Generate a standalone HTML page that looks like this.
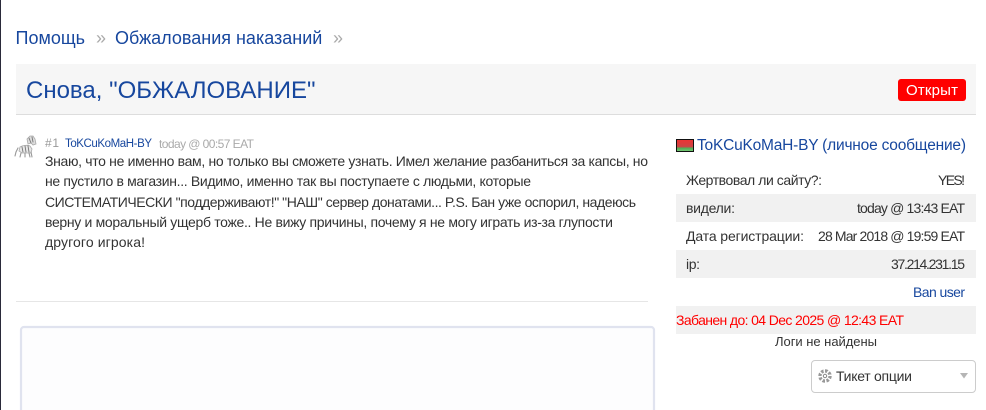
<!DOCTYPE html>
<html lang="ru">
<head>
<meta charset="utf-8">
<title>Снова, "ОБЖАЛОВАНИЕ"</title>
<style>
html,body{margin:0;padding:0;background:#fff;width:986px;height:410px;overflow:hidden}
svg{display:block;position:absolute;left:0;top:0}
text{font-family:"Liberation Sans",sans-serif;font-size:14px;fill:#333;white-space:pre}
.b{fill:#17479e}
.g{fill:#999}
</style>
</head>
<body>
<svg width="986" height="410" viewBox="0 0 986 410" xmlns="http://www.w3.org/2000/svg">
<defs>
<linearGradient id="fl" x1="0" y1="0" x2="0" y2="1">
<stop offset="0" stop-color="#e33"/><stop offset=".6" stop-color="#c44"/><stop offset=".72" stop-color="#5a5"/><stop offset="1" stop-color="#7c7"/>
</linearGradient>
</defs>
<rect x="0" y="0" width="1" height="410" fill="#2a2a3a"/>

<!-- breadcrumb -->
<text class="b" x="15.5" y="44" style="font-size:18px">Помощь</text>
<text x="96" y="44" style="font-size:18px;fill:#aaa">»</text>
<text class="b" x="115" y="44" style="font-size:18px">Обжалования наказаний</text>
<text x="333" y="44" style="font-size:18px;fill:#aaa">»</text>

<!-- title bar -->
<rect x="16" y="64" width="960" height="50" fill="#f6f6f6"/>
<rect x="16" y="114" width="960" height="1" fill="#ddd"/>
<text class="b" x="26" y="98" style="font-size:24px">Снова, "ОБЖАЛОВАНИЕ"</text>
<rect x="898" y="79" width="68" height="22" rx="3" fill="#f00"/>
<text x="906" y="95" textLength="52" lengthAdjust="spacing" style="font-size:15px;fill:#fff">Открыт</text>

<!-- avatar: striped pony -->
<g fill="none" stroke-linecap="round">
<path d="M27 139l3-3 3 0 2 3 1 5-3 1-2-2-3 1z" fill="#ddd" stroke="#aaa" stroke-width=".8"/>
<path d="M20 147c3-2 8-2 10-1l2 3-1 4h-9l-3-2z" fill="#e8e8e8" stroke="#aaa" stroke-width=".8"/>
<path d="M18 148l-2 4-1 4M21 153l-1 4M25 153v4M29 153l1 4M31 152l1 5" stroke="#999" stroke-width="1.1"/>
<path d="M22 147l1 5M25 146l1 6M28 146l1 6M29 138l2 5M32 137l1 5" stroke="#777" stroke-width=".9"/>
</g>

<!-- post header -->
<text x="45" y="147" textLength="14" lengthAdjust="spacing" style="font-size:12px;fill:#999">#1</text>
<text class="b" x="65" y="147" textLength="87" lengthAdjust="spacing" style="font-size:11.5px">ToKCuKoMaH-BY</text>
<text x="159" y="148" textLength="95" lengthAdjust="spacing" style="font-size:12px;fill:#aaa">today @ 00:57 EAT</text>

<!-- post body -->
<text x="45" y="166" textLength="603" lengthAdjust="spacing">Знаю, что не именно вам, но только вы сможете узнать. Имел желание разбаниться за капсы, но</text>
<text x="45" y="186" textLength="486" lengthAdjust="spacing">не пустило в магазин... Видимо, именно так вы поступаете с людьми, которые</text>
<text x="45" y="207" textLength="591" lengthAdjust="spacing">СИСТЕМАТИЧЕСКИ "поддерживают!" "НАШ" сервер донатами... P.S. Бан уже оспорил, надеюсь</text>
<text x="45" y="227" textLength="568" lengthAdjust="spacing">верну и моральный ущерб тоже.. Не вижу причины, почему я не могу играть из-за глупости</text>
<text x="45" y="247" textLength="100" lengthAdjust="spacing">другого игрока!</text>

<rect x="16" y="301" width="632" height="1" fill="#e6e6e6"/>

<!-- editor -->
<rect x="21" y="327" width="633" height="100" rx="3" fill="#fdfdfe" stroke="#e0e3ef" stroke-width="2.2"/>

<!-- flag + username -->
<rect x="676.5" y="139.5" width="17" height="12" fill="url(#fl)" stroke="#111"/>
<text class="b" x="697" y="150" textLength="269" lengthAdjust="spacing" style="font-size:15.5px">ToKCuKoMaH-BY (личное сообщение)</text>

<!-- info table -->
<rect x="676" y="194" width="300" height="28" fill="#f1f1f1"/>
<rect x="676" y="250" width="300" height="28" fill="#f1f1f1"/>
<text x="686" y="185" textLength="136" lengthAdjust="spacing">Жертвовал ли сайту?:</text>
<text x="938" y="185" textLength="27" lengthAdjust="spacing">YES!</text>
<text x="686" y="213" textLength="49" lengthAdjust="spacing">видели:</text>
<text x="857" y="213" textLength="108" lengthAdjust="spacing">today @ 13:43 EAT</text>
<text x="686" y="241" textLength="118" lengthAdjust="spacing">Дата регистрации:</text>
<text x="818" y="241" textLength="147" lengthAdjust="spacing">28 Mar 2018 @ 19:59 EAT</text>
<text x="686" y="269" textLength="14" lengthAdjust="spacing">ip:</text>
<text x="891" y="269" textLength="74" lengthAdjust="spacing">37.214.231.15</text>

<text class="b" x="913" y="297" textLength="52" lengthAdjust="spacing">Ban user</text>

<rect x="676" y="306" width="300" height="28" fill="#f1f1f1"/>
<text x="676" y="325" textLength="228" lengthAdjust="spacing" style="fill:#f00">Забанен до: 04 Dec 2025 @ 12:43 EAT</text>
<text x="775" y="346" textLength="102" lengthAdjust="spacing" style="font-size:13px">Логи не найдены</text>

<!-- select -->
<rect x="811.5" y="360.5" width="164" height="32" rx="3.5" fill="#fff" stroke="#ccc"/>
<g transform="translate(825 376)" fill="none" stroke="#999">
<circle r="5" stroke-width="3.2" stroke-dasharray="2.4 1.5"/>
<circle r="6.2" stroke-width="1" stroke-dasharray="3 1.9"/>
<circle r="1.7" stroke-width="1" stroke="#888"/>
</g>
<text x="836" y="381" textLength="76" lengthAdjust="spacing">Тикет опции</text>
<path d="M960 373h8l-4 5.5z" fill="#b5b5b5"/>
</svg>
</body>
</html>
